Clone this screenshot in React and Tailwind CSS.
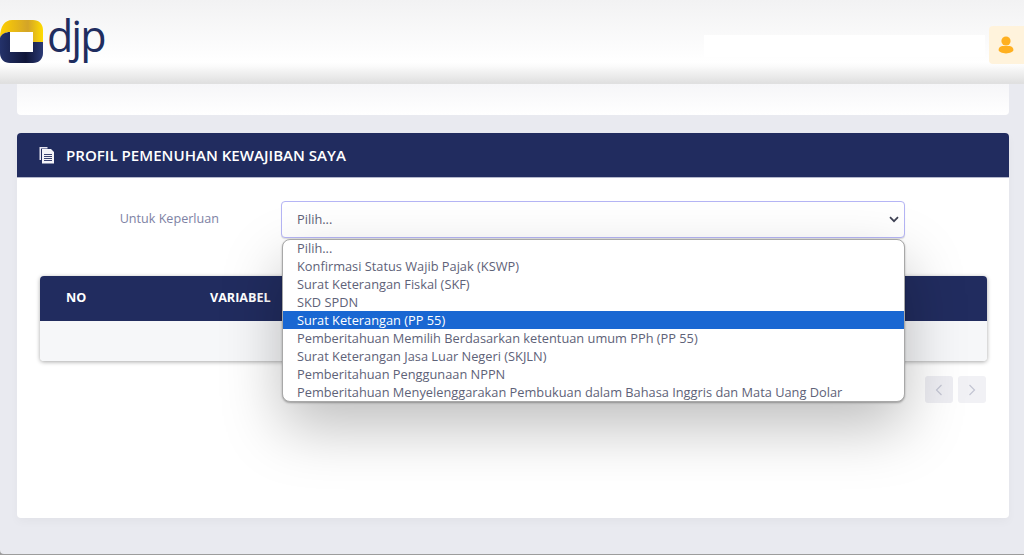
import React from "react";

const options = [
  "Pilih...",
  "Konfirmasi Status Wajib Pajak (KSWP)",
  "Surat Keterangan Fiskal (SKF)",
  "SKD SPDN",
  "Surat Keterangan (PP 55)",
  "Pemberitahuan Memilih Berdasarkan ketentuan umum PPh (PP 55)",
  "Surat Keterangan Jasa Luar Negeri (SKJLN)",
  "Pemberitahuan Penggunaan NPPN",
  "Pemberitahuan Menyelenggarakan Pembukuan dalam Bahasa Inggris dan Mata Uang Dolar",
];

function Logo() {
  return (
    <svg width="44" height="44" viewBox="0 0 44 44" className="shrink-0">
      <defs>
        <linearGradient id="y" x1="0" y1="0" x2="1" y2="0">
          <stop offset="0" stopColor="#ffd000" />
          <stop offset="0.65" stopColor="#d3a428" />
          <stop offset="1" stopColor="#ffdc00" />
        </linearGradient>
        <linearGradient id="n" x1="0" y1="0" x2="1" y2="0">
          <stop offset="0" stopColor="#24326a" />
          <stop offset="0.6" stopColor="#0f1538" />
          <stop offset="1" stopColor="#2b3a75" />
        </linearGradient>
      </defs>
      <path d="M0 18C0 6 5 0 12 0H33C39 0 43 4 43 10V24H33V12H12C6 12 2 13 0 18Z" fill="url(#y)" />
      <path d="M0 18C1 14 6 12 10 12V32H33V22H43V33C43 39 39 43 33 43H10C4 43 0 39 0 33Z" fill="url(#n)" />
      <rect x="10" y="12" width="23" height="20" fill="#fff" />
    </svg>
  );
}

function DocIcon() {
  return (
    <svg width="17" height="18" viewBox="0 0 17 18">
      <path d="M1.5 1h8v1.5H3V14H1.5Z" fill="#e8e6f2" />
      <path d="M4 3h9l3 3v11.5H4Z" fill="#f4f3f8" />
      <path d="M6 8h8v1H6ZM6 10h8v1H6ZM6 12h8v1H6ZM6 14h8v1H6Z" fill="#3a4270" />
    </svg>
  );
}

function UserIcon() {
  return (
    <svg width="16" height="18" viewBox="0 0 16 18">
      <circle cx="8" cy="5" r="4.6" fill="#ffb020" />
      <path d="M0.6 14C0.6 11.2 3 10 5 10H11C13 10 15.4 11.2 15.4 14C15.4 15.8 12 17.4 8 17.4C4 17.4 0.6 15.8 0.6 14Z" fill="#ffb020" />
    </svg>
  );
}

export default function App() {
  return (
    <div
      className="h-[555px] w-[1024px] overflow-hidden bg-[#9c9c9c] text-[12.8px] text-[#5e6278]"
      style={{ fontFamily: '"Open Sans", "Noto Sans", sans-serif' }}
    >
      <div className="relative h-[554px] overflow-hidden rounded-bl-[4px] bg-[#e9eaf0]">
        <header className="relative z-10 flex h-[84px] items-start bg-[linear-gradient(to_bottom,#f2f2f3_0,#ffffff_62px,#fbfbfb_66px,#e0e0e0_83px)]">
          <div className="mt-[20px] flex items-start">
            <Logo />
            <span className="ml-[3px] mt-[-14px] text-[43px] leading-[60px] tracking-[-2px] text-[#1f2d5f]">djp</span>
          </div>
          <div className="ml-auto mt-[26px] flex items-start">
            <div className="mr-[4px] mt-[9px] h-[22px] w-[281px] bg-white" />
            <div className="flex h-[38px] w-[35px] items-center justify-center rounded-l-[4px] bg-[#fff3dc] pr-[2px]">
              <UserIcon />
            </div>
          </div>
        </header>

        <main className="flex flex-col gap-[18px] pl-[17px] pr-[15px]">
          <div className="h-[31px] rounded-b-[4px] bg-[linear-gradient(to_bottom,#f6f6f8,#ffffff)]" />

          <section className="h-[385px] rounded-[4px] bg-white shadow-[0_4px_10px_rgba(0,0,0,0.03)]">
            <div className="flex h-[45px] items-center rounded-t-[4px] border-b border-[#b4b8cc] bg-[#212c5f] pl-[21px] text-white">
              <DocIcon />
              <h2 className="ml-[11px] text-[15.1px] font-semibold">PROFIL PEMENUHAN KEWAJIBAN SAYA</h2>
            </div>

            <div className="relative pl-[23px] pr-[22px] pt-[23px]">
              <div className="flex items-start">
                <label className="w-[179px] pt-[9px] text-right text-[12.6px] leading-[18px] text-[#7e82a4]">
                  Untuk Keperluan
                </label>
                <div className="relative ml-[62px] w-[624px]">
                  <div className="flex h-[37px] items-center justify-between rounded-[4px] border border-[#b5b5f5] bg-white pl-[15px] pr-[5px] text-[#5e6278] shadow-[0_1px_1px_rgba(0,0,0,0.12)]">
                    <span>Pilih...</span>
                    <svg width="10" height="7" viewBox="0 0 10 7">
                      <path d="M1 1.2L5 5.2L9 1.2" fill="none" stroke="#3f4254" strokeWidth="1.7" />
                    </svg>
                  </div>
                  <ul className="absolute left-[1px] top-[38px] z-20 h-[163px] w-[623px] overflow-hidden rounded-[8px] border border-[#a8a8a8] bg-white leading-[18px] text-[#5e6278] shadow-[0_1px_2px_rgba(0,0,0,0.3),0_25px_60px_rgba(0,0,0,0.26)]">
                    {options.map((o) => (
                      <li
                        key={o}
                        className={
                          o === "Surat Keterangan (PP 55)"
                            ? "relative top-[-1px] h-[18px] whitespace-nowrap bg-[#1967d2] pl-[14px] text-white"
                            : "relative top-[-1px] h-[18px] whitespace-nowrap pl-[14px]"
                        }
                      >
                        {o}
                      </li>
                    ))}
                  </ul>
                </div>
              </div>

              <div className="mt-[38px] overflow-hidden rounded-[4px] shadow-[0_1px_4px_rgba(0,0,0,0.35)]">
                <div className="flex h-[45px] items-center bg-[#212c5f] pl-[26px] text-[12.6px] font-bold text-white">
                  <span className="w-[144px]">NO</span>
                  <span>VARIABEL</span>
                </div>
                <div className="h-[40px] bg-[#f6f7f9]" />
              </div>

              <div className="mt-[15px] flex justify-end gap-[5px] pr-[1px]">
                <button className="flex h-[27px] w-[28px] items-center justify-center rounded-[3px] bg-[#eeeef3]">
                  <svg width="8" height="12" viewBox="0 0 8 12">
                    <path d="M6.5 1L1.5 6L6.5 11" fill="none" stroke="#c3c5d3" strokeWidth="1.2" />
                  </svg>
                </button>
                <button className="flex h-[27px] w-[28px] items-center justify-center rounded-[3px] bg-[#f1f1f5]">
                  <svg width="8" height="12" viewBox="0 0 8 12">
                    <path d="M1.5 1L6.5 6L1.5 11" fill="none" stroke="#c3c5d3" strokeWidth="1.2" />
                  </svg>
                </button>
              </div>
            </div>
          </section>
        </main>
      </div>
    </div>
  );
}
